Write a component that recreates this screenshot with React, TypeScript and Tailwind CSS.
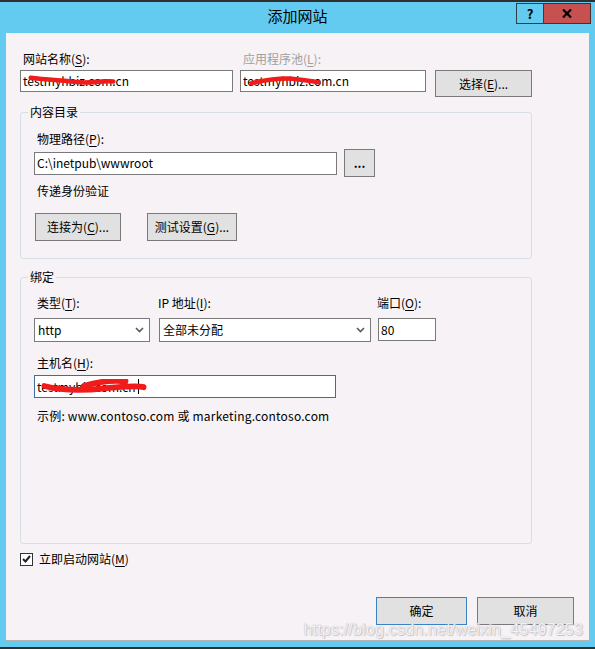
import React from "react";

const font = { fontFamily: '"Noto Sans CJK SC", "Noto Sans", sans-serif' };

const U: React.FC<{ children: React.ReactNode }> = ({ children }) => (
  <span className="underline underline-offset-2">{children}</span>
);

// red marker used to hide the domain names
const Scribble: React.FC<{ className: string; d: string }> = ({ className, d }) => (
  <svg className={`absolute pointer-events-none ${className}`} viewBox="0 0 100 12" preserveAspectRatio="none">
    <path d={d} stroke="#f21b1b" strokeWidth="5" fill="none" strokeLinecap="round" />
  </svg>
);

const TextBox: React.FC<{ className: string; value: string; focus?: boolean; children?: React.ReactNode }> = ({
  className,
  value,
  focus,
  children,
}) => (
  <div
    className={`relative flex items-center bg-white border ${
      focus ? "border-[#3c6e9e]" : "border-[#7a7a7a]"
    } pl-[2px] text-[12px] text-black ${className}`}
  >
    <span className="whitespace-nowrap">{value}</span>
    {children}
  </div>
);

const Btn: React.FC<{ className: string; children: React.ReactNode; primary?: boolean }> = ({
  className,
  children,
  primary,
}) => (
  <div
    className={`flex items-center justify-center bg-[#e1e1e1] border ${
      primary ? "border-[#3b82c4]" : "border-[#7a7a7a]"
    } text-[12px] text-black ${className}`}
  >
    {children}
  </div>
);

const Select: React.FC<{ className: string; value: string }> = ({ className, value }) => (
  <div className={`flex items-center justify-between bg-white border border-[#7a7a7a] pl-[3px] pr-[5px] text-[12px] ${className}`}>
    <span>{value}</span>
    <svg width="9" height="6" viewBox="0 0 9 6">
      <path d="M1 1 L4.5 4.5 L8 1" stroke="#5a5a5a" strokeWidth="1.6" fill="none" />
    </svg>
  </div>
);

const Group: React.FC<{ title: string; className: string; children: React.ReactNode }> = ({
  title,
  className,
  children,
}) => (
  <div className={`relative ml-[14px] w-[512px] border border-[#d5dfe5] rounded-[3px] ${className}`}>
    <span className="absolute -top-[9px] left-[7px] bg-[#f6f2f6] px-[2px] text-[12px] leading-[16px]">{title}</span>
    {children}
  </div>
);

export default function App() {
  return (
    <div className="w-[595px] h-[649px] bg-[#62cbef] flex flex-col text-black" style={font}>
      <div className="h-[2px] bg-[#2f2f2f]" />
      {/* title bar */}
      <div className="relative h-[31px] flex items-center justify-center">
        <span className="text-[15px] -mt-[2px]">添加网站</span>
        <div className="absolute right-[4px] top-[1px] flex">
          <div className="w-[28px] h-[21px] border border-[#2e3f4a] flex items-center justify-center text-[13px] font-bold">?</div>
          <div className="w-[47px] h-[21px] bg-[#c75050] border border-[#4a2e2e] border-l-0 flex items-center justify-center">
            <svg width="10" height="9" viewBox="0 0 10 9">
              <path d="M1 0.5 L9 8.5 M9 0.5 L1 8.5" stroke="#000" strokeWidth="2.2" />
            </svg>
          </div>
        </div>
      </div>
      {/* client */}
      <div className="relative mx-[6px] h-[608px] bg-[#f6f2f6] border-b border-[#b5b5b5] flex flex-col text-[12px] leading-[16px]">
        {/* top row */}
        <div className="flex mt-[18px] ml-[14px]">
          <div className="flex flex-col">
            <span className="ml-[3px] h-[19px]">
              网站名称(<U>S</U>):
            </span>
            <TextBox className="w-[213px] h-[22px]" value="testmyhbiz.com.cn">
              <Scribble className="left-[7px] top-[4px] w-[88px] h-[11px]" d="M3 3 C20 5 40 6 60 8 C70 9 85 6 97 7" />
            </TextBox>
          </div>
          <div className="flex flex-col ml-[7px]">
            <span className="ml-[3px] h-[19px] text-[#a0a0a0]">
              应用程序池(<U>L</U>):
            </span>
            <TextBox className="w-[186px] h-[22px]" value="testmyhbiz.com.cn">
              <Scribble className="left-[8px] top-[4px] w-[72px] h-[11px]" d="M3 9 C20 6 40 3 60 4 C75 5 90 7 97 8" />
            </TextBox>
          </div>
          <Btn className="ml-[9px] mt-[19px] w-[97px] h-[27px]">
            选择(<U>E</U>)...
          </Btn>
        </div>

        {/* content directory */}
        <Group title="内容目录" className="mt-[15px] h-[147px]">
          <div className="ml-[16px] mt-[18px]">
            物理路径(<U>P</U>):
          </div>
          <div className="flex items-center ml-[13px] mt-[2px]">
            <TextBox className="w-[303px] h-[23px]" value="C:\inetpub\wwwroot" />
            <Btn className="ml-[7px] w-[31px] h-[28px] font-bold">...</Btn>
          </div>
          <div className="ml-[16px] mt-[6px]">传递身份验证</div>
          <div className="flex ml-[14px] mt-[14px]">
            <Btn className="w-[86px] h-[28px]">
              连接为(<U>C</U>)...
            </Btn>
            <Btn className="ml-[26px] w-[90px] h-[28px]">
              测试设置(<U>G</U>)...
            </Btn>
          </div>
        </Group>

        {/* binding */}
        <Group title="绑定" className="mt-[18px] h-[267px]">
          <div className="flex ml-[13px] mt-[17px]">
            <div className="flex flex-col w-[116px]">
              <span className="ml-[3px] h-[23px]">
                类型(<U>T</U>):
              </span>
              <Select className="w-[116px] h-[24px]" value="http" />
            </div>
            <div className="flex flex-col ml-[9px]">
              <span className="ml-[-1px] h-[23px]">
                IP 地址(<U>I</U>):
              </span>
              <Select className="w-[212px] h-[24px]" value="全部未分配" />
            </div>
            <div className="flex flex-col ml-[7px]">
              <span className="-ml-[1px] h-[23px]">
                端口(<U>O</U>):
              </span>
              <TextBox className="w-[58px] h-[23px]" value="80" />
            </div>
          </div>
          <div className="ml-[16px] mt-[13px] h-[20px]">
            主机名(<U>H</U>):
          </div>
          <TextBox className="ml-[13px] w-[302px] h-[23px]" value="" focus>
            <span className="text-black">testmybiz.com.cn</span>
            <span className="w-px h-[15px] bg-black ml-[2px]" />
            <Scribble className="left-[6px] top-[3px] w-[106px] h-[14px]" d="M3 6 C20 10 40 10 60 8 C75 7 90 5 97 7 M40 6 C55 2 70 1 80 2" />
          </TextBox>
          <div className="ml-[16px] mt-[10px] tracking-[0.2px]">示例: www.contoso.com 或 marketing.contoso.com</div>
        </Group>

        {/* start checkbox */}
        <div className="flex items-center ml-[14px] mt-[7px]">
          <div className="w-[13px] h-[13px] border border-[#333] bg-white flex items-center justify-center">
            <svg width="9" height="8" viewBox="0 0 9 8">
              <path d="M1 4 L3.5 6.5 L8 1" stroke="#222" strokeWidth="2" fill="none" />
            </svg>
          </div>
          <span className="ml-[6px]">
            立即启动网站(<U>M</U>)
          </span>
        </div>

        {/* buttons */}
        <div className="flex ml-[370px] mt-[30px]">
          <Btn primary className="w-[91px] h-[28px]">
            确定
          </Btn>
          <Btn className="ml-[10px] w-[97px] h-[28px]">取消</Btn>
        </div>

        <span
          className="absolute right-[6px] bottom-[2px] text-[16px] leading-[16px] text-[#f4f0f4] tracking-[0.2px]"
          style={{ fontFamily: '"Liberation Sans", sans-serif', textShadow: "0 0 1px #b0b0b0, 1px 1px 1px #c8c8c8" }}
        >
          https://blog.csdn.net/weixin_45497253
        </span>
      </div>
      <div className="h-[6px]" />
      <div className="h-[2px] bg-[#2f2f2f]" />
    </div>
  );
}
